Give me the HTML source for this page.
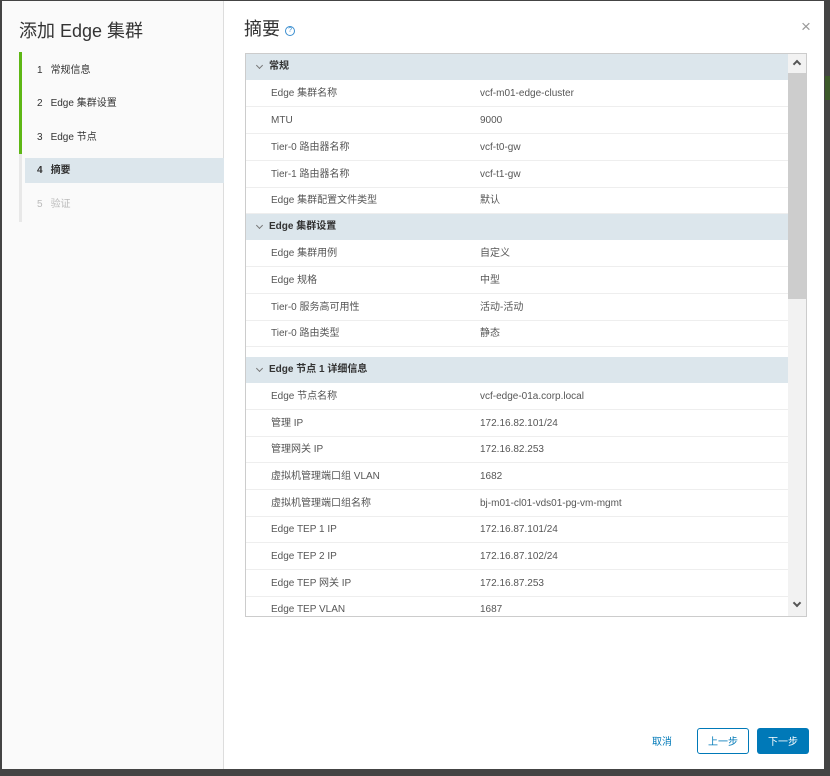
<!DOCTYPE html>
<html><head><meta charset="utf-8"><style>
*{margin:0;padding:0;box-sizing:border-box}
body{width:830px;height:776px;background:#444;font-family:"Liberation Sans","Noto Sans CJK SC",sans-serif;position:relative;overflow:hidden}
.dlg{position:absolute;left:2px;top:1px;width:822px;height:768px;background:#fff}
.left{position:absolute;left:0;top:0;width:222px;height:768px;background:#fafafa;border-right:1px solid #ddd}
.t{position:absolute;font-size:18px;color:#333}
.nav{position:absolute;left:17px;top:51px;width:3px;height:170px;background:#e8e8e8}
.nav .g{position:absolute;left:0;top:0;width:3px;height:102px;background:#5eb715}
.it{position:absolute;left:23px;width:199px;height:25px;font-size:10px;color:#333;line-height:25px;padding-left:12px}
.it.a{background:#dce6ec;font-weight:bold}
.tbl{position:absolute;left:243px;top:52px;width:562px;height:564px;border:1px solid #ccc;overflow:hidden}
.sb{position:absolute;right:0;top:0;width:18px;height:562px;background:#f2f2f2}
.th{position:absolute;right:0;top:19px;width:18px;height:226px;background:#cdcdcd}
.h{position:absolute;left:0;width:542px;height:26px;background:#dce6ec;font-size:10px;font-weight:bold;color:#333;line-height:26px;padding-left:23px}
.h:before{content:"";position:absolute;left:11px;top:9px;width:4px;height:4px;border-right:1px solid #777;border-bottom:1px solid #777;transform:rotate(45deg)}
.r{position:absolute;left:0;width:542px;height:27px;border-bottom:1px solid #eee;font-size:10px;color:#565656;line-height:27px}
.r span{position:absolute;left:25px}.r b{position:absolute;left:234px;font-weight:normal}
.btn{position:absolute;height:26px;font-size:10px;line-height:18px;text-align:center;border-radius:3px;padding-top:6px}
</style></head><body>
<div class="dlg">
<div class="left">
<div class="t" style="left:17px;top:16px">添加 Edge 集群</div>
<div class="nav"><div class="g"></div></div>
<div class="it" style="top:57px"><span style="margin-right:8px">1</span>常规信息</div>
<div class="it" style="top:90px"><span style="margin-right:8px">2</span>Edge 集群设置</div>
<div class="it" style="top:124px"><span style="margin-right:8px">3</span>Edge 节点</div>
<div class="it a" style="top:157px"><span style="margin-right:8px">4</span>摘要</div>
<div class="it" style="top:191px;color:#bbb"><span style="margin-right:8px">5</span>验证</div>
</div>
<div class="t" style="left:242px;top:14px">摘要 <span style="display:inline-block;width:10px;height:10px;border:1px solid #3c8fd0;border-radius:50%;font-size:7px;line-height:8px;text-align:center;color:#3c8fd0;vertical-align:3px">?</span></div>
<div style="position:absolute;left:799px;top:16px;font-size:17px;color:#999;font-weight:lighter">×</div>
<div class="tbl">
<div class="h" style="top:0">常规</div>
<div class="r" style="top:26px"><span>Edge 集群名称</span><b>vcf-m01-edge-cluster</b></div>
<div class="r" style="top:53px"><span>MTU</span><b>9000</b></div>
<div class="r" style="top:80px"><span>Tier-0 路由器名称</span><b>vcf-t0-gw</b></div>
<div class="r" style="top:107px"><span>Tier-1 路由器名称</span><b>vcf-t1-gw</b></div>
<div class="r" style="top:133px"><span>Edge 集群配置文件类型</span><b>默认</b></div>
<div class="h" style="top:160px">Edge 集群设置</div>
<div class="r" style="top:186px"><span>Edge 集群用例</span><b>自定义</b></div>
<div class="r" style="top:213px"><span>Edge 规格</span><b>中型</b></div>
<div class="r" style="top:240px"><span>Tier-0 服务高可用性</span><b>活动-活动</b></div>
<div class="r" style="top:266px"><span>Tier-0 路由类型</span><b>静态</b></div>
<div class="h" style="top:303px">Edge 节点 1 详细信息</div>
<div class="r" style="top:329px"><span>Edge 节点名称</span><b>vcf-edge-01a.corp.local</b></div>
<div class="r" style="top:356px"><span>管理 IP</span><b>172.16.82.101/24</b></div>
<div class="r" style="top:382px"><span>管理网关 IP</span><b>172.16.82.253</b></div>
<div class="r" style="top:409px"><span>虚拟机管理端口组 VLAN</span><b>1682</b></div>
<div class="r" style="top:436px"><span>虚拟机管理端口组名称</span><b>bj-m01-cl01-vds01-pg-vm-mgmt</b></div>
<div class="r" style="top:462px"><span>Edge TEP 1 IP</span><b>172.16.87.101/24</b></div>
<div class="r" style="top:489px"><span>Edge TEP 2 IP</span><b>172.16.87.102/24</b></div>
<div class="r" style="top:516px"><span>Edge TEP 网关 IP</span><b>172.16.87.253</b></div>
<div class="r" style="top:542px"><span>Edge TEP VLAN</span><b>1687</b></div>
<div class="sb"><div class="th"></div>
<div style="position:absolute;left:6px;top:7px;width:6px;height:6px;border-left:2px solid #555;border-top:2px solid #555;transform:rotate(45deg)"></div>
<div style="position:absolute;left:6px;top:546px;width:6px;height:6px;border-right:2px solid #555;border-bottom:2px solid #555;transform:rotate(45deg)"></div>
</div>
</div>
<div class="btn" style="left:640px;top:727px;width:40px;color:#0079b8">取消</div>
<div class="btn" style="left:695px;top:727px;width:52px;border:1px solid #0079b8;color:#0079b8;padding-top:5px">上一步</div>
<div class="btn" style="left:755px;top:727px;width:52px;background:#0079b8;color:#fff">下一步</div>
</div>
<div style="position:absolute;left:825px;top:76px;width:5px;height:24px;background:#3d5a2a"></div>
</body></html>
